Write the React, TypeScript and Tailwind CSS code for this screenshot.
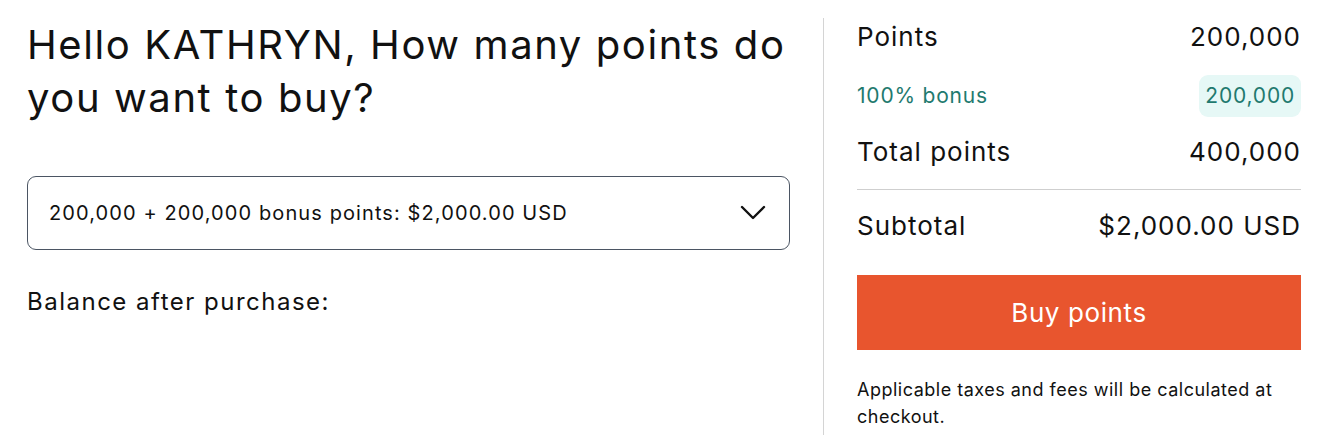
export default function App() {
  return (
    <div className="flex min-h-screen w-full bg-white pl-[27px] pt-[18px] font-['Inter',sans-serif] text-[#111]">
      {/* Left column */}
      <section className="w-[763px] shrink-0">
        <h1 className="text-[40px] leading-[53px] font-normal tracking-[1.6px] text-[#111]">
          Hello KATHRYN, How many points do you want to buy?
        </h1>

        <button
          type="button"
          className="mt-[52px] flex h-[74px] w-full items-center justify-between rounded-[9px] border border-[#4b5563] pl-[21px] pr-[22px] text-left"
        >
          <span className="text-[20px] tracking-[1.1px] text-[#111]">
            200,000 + 200,000 bonus points: $2,000.00 USD
          </span>
          <svg width="26" height="16" viewBox="0 0 26 16" fill="none" className="mr-[1px]">
            <path d="M2 2l11 11L24 2" stroke="#111" strokeWidth="2.4" strokeLinecap="round" strokeLinejoin="round" />
          </svg>
        </button>

        <p className="mt-[34px] text-[24px] tracking-[1.5px] text-[#111]">Balance after purchase:</p>
      </section>

      {/* Divider */}
      <div className="mx-[33px] h-[417px] w-px shrink-0 bg-[#d4d4d4]" />

      {/* Right column: summary */}
      <aside className="w-[444px] shrink-0">
        <div className="-mt-[2px] flex h-[40px] items-center justify-between text-[26px] tracking-[1px]">
          <span>Points</span>
          <span>200,000</span>
        </div>
        <div className="mt-[19px] flex h-[42px] items-center justify-between text-[21px] tracking-[0.8px] text-[#1f7a6f]">
          <span>100% bonus</span>
          <span className="rounded-[9px] bg-[#e6f8f6] px-[6px] py-[8px] leading-[26px]">200,000</span>
        </div>
        <div className="mt-[14px] flex h-[40px] items-center justify-between text-[26px] tracking-[1px]">
          <span>Total points</span>
          <span>400,000</span>
        </div>
        <div className="mt-[18px] h-px w-full bg-[#cfcfcf]" />
        <div className="mt-[15px] flex h-[40px] items-center justify-between text-[26px] tracking-[1px]">
          <span>Subtotal</span>
          <span>$2,000.00 USD</span>
        </div>
        <button
          type="button"
          className="mt-[30px] flex h-[75px] w-full items-center justify-center bg-[#e8552e] text-[26px] tracking-[0.6px] text-white"
        >
          Buy points
        </button>
        <p className="mt-[26px] text-[18px] leading-[27px] tracking-[0.5px] text-[#111]">
          Applicable taxes and fees will be calculated at checkout.
        </p>
      </aside>
    </div>
  );
}
